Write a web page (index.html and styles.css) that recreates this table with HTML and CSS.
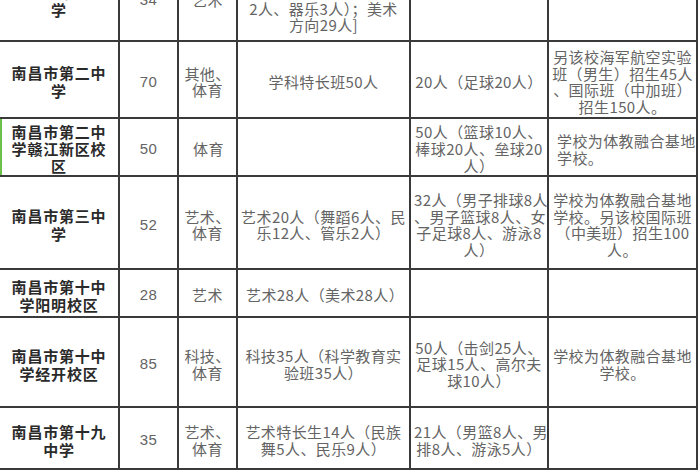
FILE: index.html
```html
<!DOCTYPE html>
<html lang="zh-CN">
<head>
<meta charset="utf-8">
<title>南昌市学校特长生招生表</title>
<link rel="stylesheet" href="styles.css">
</head>
<body>
<table class="grid">
  <colgroup>
    <col class="c-name">
    <col class="c-num">
    <col class="c-type">
    <col class="c-art">
    <col class="c-sport">
    <col class="c-note">
  </colgroup>
  <tbody>
    <tr class="r0">
      <td class="name">南昌市第一中<br>学</td>
      <td class="num">34</td>
      <td>艺术</td>
      <td>艺术34人[音乐方向5人<br>（声乐2人、舞蹈2人、<br>2人、器乐3人）；美术<br>方向29人]</td>
      <td></td>
      <td></td>
    </tr>
    <tr class="r1">
      <td class="name">南昌市第二中<br>学</td>
      <td class="num">70</td>
      <td>其他、<br>体育</td>
      <td>学科特长班50人</td>
      <td>20人（足球20人）</td>
      <td>另该校海军航空实验<br>班（男生）招生45人<br>、国际班（中加班）<br>招生150人。</td>
    </tr>
    <tr class="r2">
      <td class="name mark">南昌市第二中<br>学赣江新区校<br>区</td>
      <td class="num">50</td>
      <td class="left indent">体育</td>
      <td></td>
      <td>50人（篮球10人、<br>棒球20人、垒球20<br>人）</td>
      <td class="left">学校为体教融合基地<br>学校。</td>
    </tr>
    <tr class="r3">
      <td class="name">南昌市第三中<br>学</td>
      <td class="num">52</td>
      <td>艺术、<br>体育</td>
      <td>艺术20人（舞蹈6人、民<br>乐12人、管乐2人）</td>
      <td>32人（男子排球8人<br>、男子篮球8人、女<br>子足球8人、游泳8<br>人）</td>
      <td>学校为体教融合基地<br>学校。另该校国际班<br>（中美班）招生100<br>人。</td>
    </tr>
    <tr class="r4">
      <td class="name">南昌市第十中<br>学阳明校区</td>
      <td class="num">28</td>
      <td>艺术</td>
      <td class="left">艺术28人（美术28人）</td>
      <td></td>
      <td></td>
    </tr>
    <tr class="r5">
      <td class="name">南昌市第十中<br>学经开校区</td>
      <td class="num">85</td>
      <td>科技、<br>体育</td>
      <td>科技35人（科学教育实<br>验班35人）</td>
      <td>50人（击剑25人、<br>足球15人、高尔夫<br>球10人）</td>
      <td>学校为体教融合基地<br>学校。</td>
    </tr>
    <tr class="r6">
      <td class="name">南昌市第十九<br>中学</td>
      <td class="num">35</td>
      <td>艺术、<br>体育</td>
      <td>艺术特长生14人（民族<br>舞5人、民乐9人）</td>
      <td>21人（男篮8人、男<br>排8人、游泳5人）</td>
      <td></td>
    </tr>
  </tbody>
</table>
</body>
</html>
```

FILE: styles.css
```css
html, body {
  margin: 0;
  padding: 0;
  background: #ffffff;
}

.grid {
  border-collapse: collapse;
  table-layout: fixed;
  width: 698px;
  margin-top: -46px;
  font-family: "Noto Sans CJK SC", "Noto Sans", sans-serif;
}

.c-name { width: 119px; }
.c-num { width: 59px; }
.c-type { width: 59px; }
.c-art { width: 173px; }
.c-sport { width: 138px; }
.c-note { width: 149px; }

.grid td {
  border: 2px solid #3a3a3a;
  padding: 5px 3px 0;
  text-align: center;
  vertical-align: middle;
  font-size: 15px;
  line-height: 16.5px;
  letter-spacing: 0.4px;
  color: #646464;
  white-space: nowrap;
  overflow: hidden;
}

.grid td:first-child {
  border-left: none;
}

.grid td.name {
  font-weight: bold;
  color: #2a2a2a;
  line-height: 18px;
  letter-spacing: 0.8px;
}

.grid td.num {
  font-family: "Liberation Sans", "Noto Sans CJK SC", sans-serif;
  font-size: 15px;
}

.grid td.left {
  text-align: left;
  padding-left: 8px;
}

.grid td.indent {
  padding-left: 14px;
}

.grid td.mark {
  box-shadow: inset 2px 0 0 #6cc04a;
}

.r0 { height: 86px; }
.r1 { height: 77px; }
.r2 { height: 58px; }
.r2 td { line-height: 17px; padding-top: 3px; }
.r2 td.name { line-height: 17px; }
.r3 { height: 93px; }
.r4 { height: 48px; }
.r5 { height: 90px; }
.r6 { height: 62px; }
```
